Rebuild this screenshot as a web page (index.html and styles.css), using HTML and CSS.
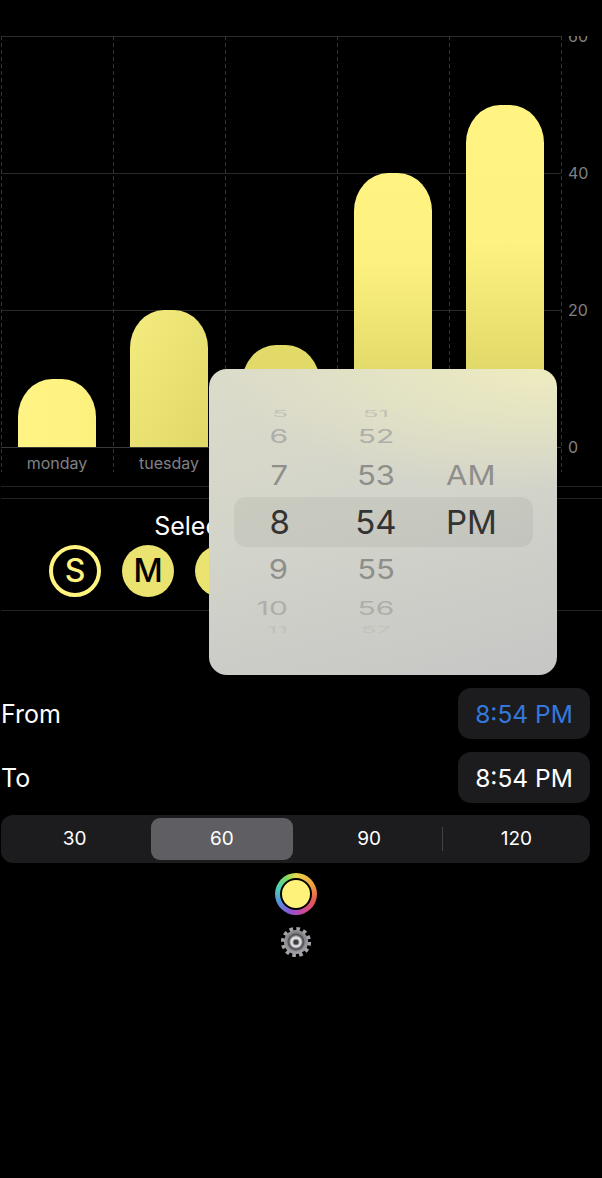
FILE: index.html
```html
<!DOCTYPE html>
<html lang="en">

<head>
    <meta charset="UTF-8">
    <meta name="viewport" content="width=device-width, initial-scale=1.0">
    <title>Schedule</title>
    <link rel="stylesheet" href="styles.css">
</head>

<body>
    <div class="page">
        <section class="chart">
            <div class="gridlines">
                <div class="grid-row"><i></i><span>60</span></div>
                <div class="grid-row"><i></i><span>40</span></div>
                <div class="grid-row"><i></i><span>20</span></div>
                <div class="grid-row grid-base"><i></i><span>0</span></div>
            </div>
            <div class="plot">
                <div class="col">
                    <div class="bar-area"><div class="bar bar-mon"></div></div>
                    <div class="col-label">monday</div>
                </div>
                <div class="col">
                    <div class="bar-area"><div class="bar bar-tue"></div></div>
                    <div class="col-label">tuesday</div>
                </div>
                <div class="col">
                    <div class="bar-area"><div class="bar bar-wed"></div></div>
                    <div class="col-label">wednesday</div>
                </div>
                <div class="col">
                    <div class="bar-area"><div class="bar bar-thu"></div></div>
                    <div class="col-label">thursday</div>
                </div>
                <div class="col">
                    <div class="bar-area"><div class="bar bar-fri"></div></div>
                    <div class="col-label">friday</div>
                </div>
                <div class="col col-end"></div>
            </div>
        </section>

        <div class="rule rule-first"></div>
        <div class="rule rule-second"></div>

        <section class="days">
            <div class="days-title">Select days of the week</div>
            <div class="days-row">
                <div class="day day-off">S</div>
                <div class="day">M</div>
                <div class="day">T</div>
                <div class="day">W</div>
                <div class="day">T</div>
                <div class="day">F</div>
                <div class="day day-off">S</div>
            </div>
        </section>

        <div class="rule"></div>

        <section class="controls">
            <div class="time-row">
                <span>From</span>
                <button class="time-btn time-active">8:54 PM</button>
            </div>
            <div class="time-row">
                <span>To</span>
                <button class="time-btn">8:54 PM</button>
            </div>
            <div class="segments">
                <div class="segment">30</div>
                <div class="segment segment-on">60</div>
                <div class="segment segment-split">90</div>
                <div class="segment">120</div>
            </div>
            <div class="color-ring"><div class="color-dot"></div></div>
            <svg class="gear" width="32" height="32" viewBox="0 0 32 32">
                <defs>
                    <radialGradient id="metal" cx="50%" cy="45%" r="55%">
                        <stop offset="0" stop-color="#d8d8da" />
                        <stop offset="0.55" stop-color="#77777b" />
                        <stop offset="1" stop-color="#a9a9ad" />
                    </radialGradient>
                </defs>
                <circle cx="16" cy="16" r="13.3" fill="none" stroke="#a5a5a9" stroke-width="3.6" stroke-dasharray="3.6 3.36" />
                <circle cx="16" cy="16" r="12" fill="url(#metal)" />
                <circle cx="16" cy="16" r="7.6" fill="none" stroke="#55555a" stroke-width="1.6" />
                <circle cx="16" cy="16" r="4.6" fill="none" stroke="#e2e2e4" stroke-width="2" />
                <circle cx="16" cy="16" r="2.6" fill="#3a3a3d" />
            </svg>
        </section>
    </div>

    <div class="picker">
        <div class="wheel">
            <div class="wheel-row r3"><span>5</span><span>51</span><span></span></div>
            <div class="wheel-row r2"><span>6</span><span>52</span><span></span></div>
            <div class="wheel-row r1"><span>7</span><span>53</span><span>AM</span></div>
            <div class="wheel-row r0"><span>8</span><span>54</span><span>PM</span></div>
            <div class="wheel-row r1"><span>9</span><span>55</span><span></span></div>
            <div class="wheel-row r2"><span>10</span><span>56</span><span></span></div>
            <div class="wheel-row r3"><span>11</span><span>57</span><span></span></div>
        </div>
    </div>
</body>

</html>
```

FILE: styles.css
```css
body {
    background-color: #000;
    color: #fff;
    font-family: Inter, "Liberation Sans", sans-serif;
    margin: 0;
    padding: 0;
    height: 1178px;
    overflow: hidden;
}

.page {
    padding: 36px 0 0 1px;
}

/* chart */
.chart {
    position: relative;
    height: 436px;
    overflow: hidden;
}

.gridlines {
    position: absolute;
    top: 0;
    left: 0;
    right: 0;
    height: 412px;
    display: flex;
    flex-direction: column;
    justify-content: space-between;
}

.grid-row {
    display: flex;
    align-items: center;
    height: 1px;
}

.grid-row i {
    width: 560px;
    height: 1px;
    background-color: #2a2a2a;
}

.grid-base i {
    background-color: #3a3a3a;
}

.grid-row span {
    margin-left: 7px;
    font-size: 16px;
    line-height: 16px;
    color: #808084;
    position: relative;
    top: -1px;
}

.plot {
    position: relative;
    display: flex;
}

.col {
    width: 112px;
    height: 436px;
    background: repeating-linear-gradient(to bottom, #333 0 4px, transparent 4px 7px) left top / 1px 100% no-repeat;
}

.col-end {
    width: 1px;
}

.bar-area {
    height: 411px;
    display: flex;
    justify-content: center;
    align-items: flex-end;
}

.bar {
    width: 78px;
    border-radius: 34px 34px 0 0 / 38px 38px 0 0;
}

.bar-mon {
    height: 68px;
    background: linear-gradient(to right, #fff484, #fef380 70%, #fbf07c);
}

.bar-tue {
    height: 137px;
    background: linear-gradient(120deg, #f4ec7e, #dfd766);
}

.bar-wed {
    height: 102px;
    background: #e1d968;
}

.bar-thu {
    height: 274px;
    background: linear-gradient(to bottom, #fff481 0, #fdf27f 32%, #e0d868 76%);
}

.bar-fri {
    height: 342px;
    background: linear-gradient(to bottom, #fff481 0, #fef381 40%, #e0d868 78%);
}

.col-label {
    text-align: center;
    font-size: 16px;
    line-height: 32px;
    color: #808085;
}

.rule {
    height: 1px;
    background-color: #222;
}

.rule-first {
    margin-top: 14px;
}

.rule-second {
    margin-top: 11px;
}

/* days */
.days {
    width: 589px;
    height: 111px;
    text-align: center;
}

.days-title {
    padding-top: 12px;
    font-size: 25px;
    line-height: 30px;
    white-space: nowrap;
}

.days-row {
    display: flex;
    justify-content: center;
    gap: 21px;
    margin-top: 4px;
    padding-right: 3px;
}

.day {
    box-sizing: border-box;
    width: 52px;
    height: 52px;
    border-radius: 50%;
    background-color: #ebe36f;
    color: #000;
    font-size: 32px;
    font-weight: 500;
    line-height: 52px;
}

.day-off {
    background-color: transparent;
    border: 4px solid #fff480;
    color: #fff480;
    line-height: 44px;
}

/* time controls */
.controls {
    width: 589px;
    padding-top: 77px;
}

.time-row {
    display: flex;
    justify-content: space-between;
    align-items: center;
    height: 51px;
    margin-bottom: 13px;
    font-size: 25px;
}

.time-row:nth-child(2) {
    margin-bottom: 12px;
}

.time-btn {
    width: 132px;
    height: 51px;
    border: none;
    border-radius: 13px;
    background-color: #1c1c1e;
    color: #fff;
    font-family: inherit;
    font-size: 24.5px;
    padding: 0;
}

.time-active {
    color: #3478dc;
}

.segments {
    display: flex;
    height: 48px;
    border-radius: 12px;
    background-color: #1c1c1e;
}

.segment {
    position: relative;
    width: 25%;
    margin: 3px 0;
    border-radius: 9px;
    font-size: 19px;
    line-height: 42px;
    text-align: center;
}

.segment-on {
    width: calc(25% - 6px);
    margin: 3px;
    background-color: #5f5f63;
}

.segment-split::after {
    content: "";
    position: absolute;
    right: 0;
    top: 9px;
    width: 1px;
    height: 24px;
    background-color: #434345;
}

.color-ring {
    box-sizing: border-box;
    width: 42px;
    height: 42px;
    margin: 10px auto 0;
    padding: 5px;
    border-radius: 50%;
    background: conic-gradient(#e9d84e, #f0a23c 60deg, #e8584f 110deg, #c8489c 160deg, #8a55d8 200deg, #4f9ad8 250deg, #4fd0b0 290deg, #7fdc5c 330deg, #e9d84e);
}

.color-dot {
    box-sizing: border-box;
    width: 32px;
    height: 32px;
    border: 2px solid #000;
    border-radius: 50%;
    background-color: #fff27a;
}

.gear {
    display: block;
    margin: 11px auto 0;
}

/* time picker popover */
.picker {
    position: absolute;
    left: 209px;
    top: 369px;
    width: 348px;
    height: 306px;
    padding: 40px 24px 0 25px;
    box-sizing: border-box;
    border-radius: 18px;
    background:
        radial-gradient(ellipse 90% 40% at 95% 0, rgba(240, 238, 190, 0.9), rgba(240, 238, 190, 0)),
        linear-gradient(165deg, #dcdcca 0, #d2d3ca 50%, #c6c6c5 100%);
}

.wheel-row {
    display: grid;
    grid-template-columns: 56px 156px 1fr;
    grid-auto-rows: 100%;
    align-items: center;
    overflow: hidden;
    line-height: 1;
}

.wheel-row span:nth-child(1) {
    padding-right: 2px;
    text-align: right;
}

.wheel-row span:nth-child(2) {
    padding-left: 16px;
    text-align: center;
}

.r0 {
    height: 50px;
    border-radius: 12px;
    background-color: rgba(0, 0, 0, 0.05);
    color: #333;
    font-size: 33px;
}

.r0 span:nth-child(1) {
    padding-right: 0;
}

.r1 {
    height: 44px;
    color: #8e8e8a;
    font-size: 31px;
}

.r1 span {
    transform: translateY(-1px) scaleY(0.88);
}

.r2 {
    height: 34px;
    color: #aeaea8;
    font-size: 30px;
}

.r2 span {
    transform: scaleY(0.62);
}

.r3 {
    height: 10px;
    color: #c2c2b8;
    font-size: 26px;
}

.r3 span {
    transform: scaleY(0.35);
}
```
